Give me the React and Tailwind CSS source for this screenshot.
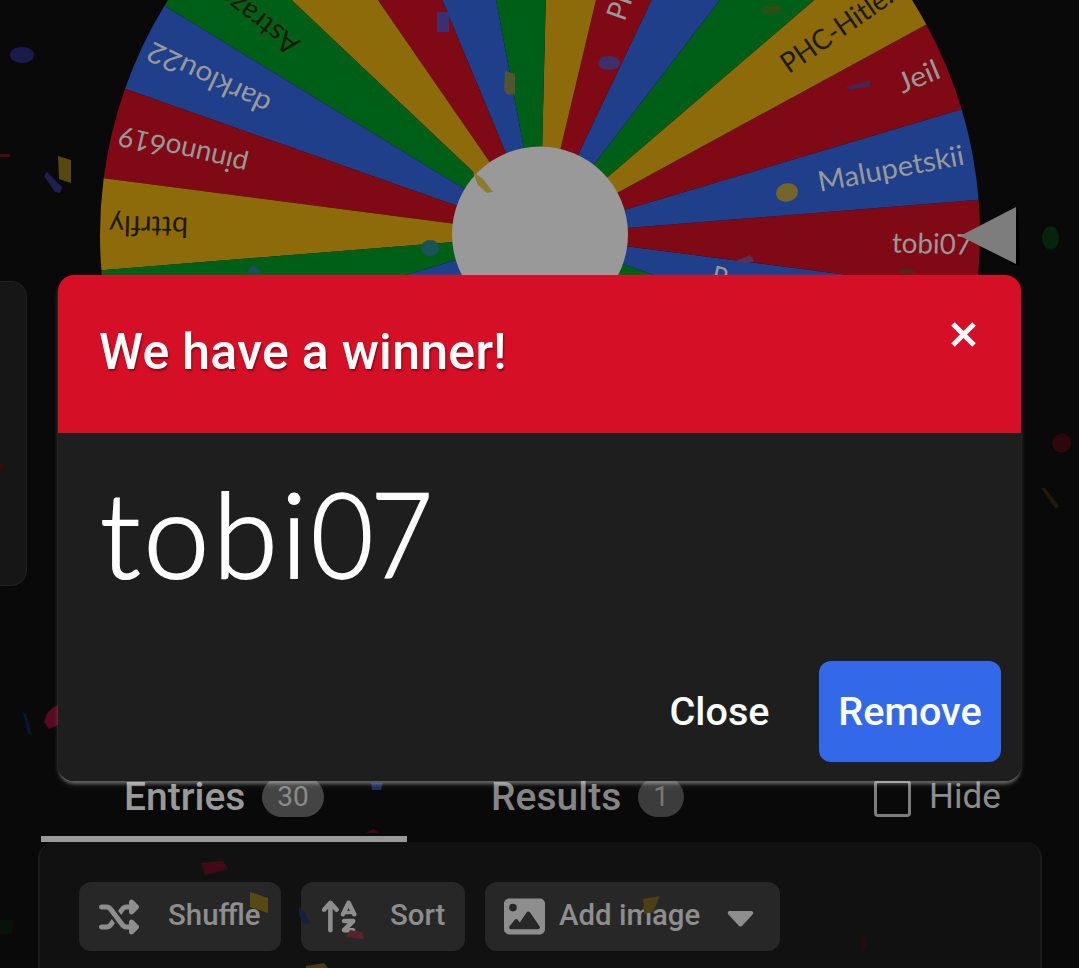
import React, { useState } from "react";
import { FaShuffle, FaArrowUpAZ, FaImage } from "react-icons/fa6";

const RED = "#800916";
const BLUE = "#1f3f8b";
const GREEN = "#005f17";
const YELLOW = "#8d6b0a";

const CX = 540;
const CY = 235;
const R = 440;

// angle = where the slice starts, counter clockwise from the right
const slices = [
  { angle: -31.4, color: GREEN },
  { angle: -19.4, color: BLUE, label: "P", start: 177, length: 15 },
  { angle: -7.4, color: RED, label: "tobi07", start: 352, length: 80 },
  { angle: 4.6, color: BLUE, label: "Malupetskii", start: 283, length: 148 },
  { angle: 16.6, color: RED, label: "Jeil", start: 389, length: 43 },
  { angle: 28.6, color: YELLOW, label: "PHC-Hitle...", start: 296, length: 142 },
  { angle: 40.6, color: GREEN },
  { angle: 52.6, color: BLUE },
  { angle: 64.6, color: RED, label: "PHC-", start: 229, length: 66 },
  { angle: 76.6, color: YELLOW },
  { angle: 88.6, color: GREEN },
  { angle: 100.6, color: BLUE },
  { angle: 112.6, color: RED },
  { angle: 124.6, color: YELLOW },
  { angle: 136.6, color: GREEN, label: "Astrazon", start: 307, length: 113 },
  { angle: 148.6, color: BLUE, label: "darklou22", start: 300, length: 133 },
  { angle: 160.6, color: RED, label: "pinuno619", start: 301, length: 132 },
  { angle: 172.6, color: YELLOW, label: "bttrfly", start: 352, length: 79 },
  { angle: 184.6, color: GREEN },
  { angle: 196.6, color: BLUE },
];

function point(angle) {
  const rad = (angle * Math.PI) / 180;
  return `${CX + R * Math.cos(rad)} ${CY - R * Math.sin(rad)}`;
}

function Wheel() {
  return (
    <svg width="1079" height="290" viewBox="0 0 1079 290" className="block shrink-0">
      {slices.map((s) => (
        <path
          key={s.angle}
          d={`M${CX} ${CY} L${point(s.angle)} A${R} ${R} 0 0 0 ${point(s.angle + 12)} Z`}
          fill={s.color}
        />
      ))}
      {slices
        .filter((s) => s.label)
        .map((s) => (
          <text
            key={s.angle}
            x={CX + s.start}
            y={CY + 9}
            textLength={s.length}
            lengthAdjust="spacingAndGlyphs"
            transform={`rotate(${-(s.angle + 6)} ${CX} ${CY})`}
            fill={s.color === RED || s.color === BLUE ? "#999999" : "#1c1a08"}
            className="font-['Lato',sans-serif] text-[28px] [font-variant-ligatures:none]"
          >
            {s.label}
          </text>
        ))}
      <circle cx={CX} cy="234.5" r="88" fill="#999999" />
      <path d="M1018 206 L1020 266 L1010 264 Z" fill="#000000" />
      <path d="M960 236 L1016 207 V264 Z" fill="#7d7d7d" />
    </svg>
  );
}

const confetti = [
  ["M10 55a12 8 0 1 0 24 0a12 8 0 1 0-24 0", "#1a1b4c"],
  ["M0 154h10v3h-10z", "#4a0a12"],
  ["M58 156l13 4v23l-12-4z", "#58470f"],
  ["M47 172l15 15l-2 6l-5-1l-11-16z", "#1e2050"],
  ["M437 12h12v20h-12z", "#3a2f72"],
  ["M505 71l10 3v20l-7 1l-4-5z", "#51562f"],
  ["M598 63a11 7 0 1 0 22 0a11 7 0 1 0-22 0", "#3d3069"],
  ["M776 194a11 9 -15 1 0 22-3a11 9 -15 1 0-22 3", "#75652a"],
  ["M846 87l24-6v5l-20 4z", "#41285a"],
  ["M473 172l10 7l10 13l-6 1l-9-8z", "#8b7c30"],
  ["M421 248a9 8 0 1 0 18 0a9 8 0 1 0-18 0", "#1a5355"],
  ["M246 273l8-8l8 8z", "#1d4b68"],
  ["M762 9q12-8 22 0q-10 8-20 4z", "#2c4f18"],
  ["M736 261l14-6l4 6l-9 3z", "#593059"],
  ["M898 273q8-8 18 0z", "#44301a"],
  ["M1042 238a8 11 0 1 0 17 0a8 11 0 1 0-17 0", "#04240b"],
  ["M1052 443a9 9 0 1 0 19 0a9 9 0 1 0-19 0", "#2e070e"],
  ["M1041 488l4 0l14 18l-3 3z", "#221b0b"],
  ["M0 462l4 4l-4 6z", "#3c0810"],
  ["M44 722q2-12 14-17v20l-9 4z", "#560a20"],
  ["M23 712l3 2l6 20l-4 0z", "#0a1633"],
  ["M371 783h12l-2 7h-9z", "#1d2c5b"],
  ["M366 833l7-4l7 4z", "#3b0a13"],
  ["M201 863l22-2l5 8l-23 6z", "#430916"],
  ["M250 892l18 6l0 15l-18-6z", "#574814"],
  ["M299 907l6 6l5 10l-6 1l-5-9z", "#1b1e3c"],
  ["M350 930l12 2l2 7l-18-2z", "#57242b"],
  ["M306 966l18-3l4 5h-22z", "#4b3a10"],
  ["M643 899l17-3l-7 16l-9 2z", "#4b4014"],
  ["M860 934l4 2l4 12l-6 3z", "#200d0e"],
  ["M0 920h14l-2 14h-12z", "#06130a"],
];

function Confetti() {
  return (
    <svg width="1079" height="968" className="absolute inset-0 pointer-events-none">
      {confetti.map(([d, fill]) => (
        <path key={d} d={d} fill={fill} />
      ))}
    </svg>
  );
}

function Tabs() {
  return (
    <div className="flex h-[62px] pl-[41px] shrink-0">
      <div className="flex w-[366px] h-full border-b-[6px] border-[#999999] pl-[83px] text-[#999999]">
        <span className="text-[39px] leading-[38px] font-medium mt-[-2px] w-[138px] whitespace-nowrap">
          Entries
        </span>
        <span className="flex justify-center w-[62px] h-[40px] mt-[-3px] rounded-full bg-[#444444] text-[#8a8a8a] text-[28px] leading-[39px]">
          30
        </span>
      </div>
      <div className="flex w-[467px] pl-[84px] text-[#858585]">
        <span className="text-[39px] leading-[38px] font-medium mt-[-2px] w-[147px] whitespace-nowrap">
          Results
        </span>
        <span className="flex justify-center w-[46px] h-[40px] mt-[-3px] rounded-full bg-[#3c3c3c] text-[#777777] text-[28px] leading-[39px]">
          1
        </span>
      </div>
      <label className="flex text-[#8c8c8c]">
        <span className="w-[37px] h-[37px] border-[3px] border-[#7c7c7c] rounded-[4px]" />
        <span className="ml-[18px] text-[35px] leading-[35px] mt-[-1px]">Hide</span>
      </label>
    </div>
  );
}

function ToolButton({ className, children }) {
  return (
    <button
      className={`flex items-center h-[69px] rounded-xl bg-[#272727] text-[#8e8e8e] text-[29.4px] font-medium whitespace-nowrap ${className}`}
    >
      {children}
    </button>
  );
}

function Toolbar() {
  return (
    <div className="flex gap-5 w-[1004px] h-[140px] ml-[38px] pl-[39px] pt-[40px] shrink-0 bg-[#111111] border-x-2 border-[#191919] rounded-t-2xl">
      <ToolButton className="w-[202px] pl-[20px]">
        <FaShuffle className="w-[40px] h-[40px] shrink-0" />
        <span className="ml-[29px] mb-[3px]">Shuffle</span>
      </ToolButton>
      <ToolButton className="w-[164px] pl-[18px]">
        <FaArrowUpAZ className="w-[41px] h-[41px] shrink-0" />
        <span className="ml-[30px] mb-[3px]">Sort</span>
      </ToolButton>
      <ToolButton className="w-[295px] pl-[19px]">
        <FaImage className="w-[41px] h-[41px] shrink-0" />
        <span className="ml-[14px] mb-[3px]">Add image</span>
        <svg viewBox="0 0 27 17" className="w-[27px] h-[17px] ml-[27px] mt-[3px]">
          <path d="M2 1h23q2 1 1 3L15 16q-1.500 1-3 0L1 4Q0 2 2 1z" fill="currentColor" />
        </svg>
      </ToolButton>
    </div>
  );
}

// digits are narrower and tighter than letters in the winner's name
function WinnerName({ name }) {
  return name.split(/(\d+)/).map((part, i) => (
    <span
      key={i}
      className={
        i % 2
          ? "inline-block origin-left scale-x-[0.91] tracking-[-3px]"
          : "tracking-[3.3px]"
      }
    >
      {part}
    </span>
  ));
}

function WinnerDialog({ name, onClose }) {
  return (
    <div className="absolute left-[58px] top-[275px] w-[963px] h-[506px] rounded-[16px] shadow-[0_4px_3px_-1px_rgba(255,255,255,0.24),0_5px_7px_-1px_rgba(255,255,255,0.12),0_1px_5px_rgba(255,255,255,0.1)]">
      <div className="flex flex-col h-full rounded-[16px] overflow-hidden bg-[#1e1e1e] text-white">
        <div className="flex justify-between h-[158px] pl-[41px] pr-[44px] bg-[#d50f25] shrink-0">
          <h1 className="mt-[47px] text-[50px] leading-[60px] font-medium tracking-[0.28px] [text-shadow:1px_2px_2px_rgba(0,0,0,0.4)]">
            We have a winner!
          </h1>
          <button onClick={onClose} aria-label="close" className="mt-[46px] h-[27px]">
            <svg viewBox="0 0 27 27" className="w-[27px] h-[27px]">
              <path d="M3 3L24 24M24 3L3 24" stroke="white" strokeWidth="5" />
            </svg>
          </button>
        </div>
        <div className="h-[228px] pl-[42px] pt-[28px] font-['Lato',sans-serif] font-light text-[118px] leading-[144px] [-webkit-text-stroke:2px_white]">
          <WinnerName name={name} />
        </div>
        <div className="flex justify-end pr-[20px] text-[39.6px] font-medium">
          <button onClick={onClose} className="w-[150px] h-[101px] pr-[1px]">
            Close
          </button>
          <button
            onClick={onClose}
            className="ml-[24px] w-[182px] h-[101px] rounded-xl bg-[#3369e8]"
          >
            Remove
          </button>
        </div>
      </div>
    </div>
  );
}

function App() {
  const [open, setOpen] = useState(true);

  return (
    <div className="relative flex flex-col w-[1079px] h-[968px] overflow-hidden bg-[#090909] font-['Roboto',sans-serif]">
      <Wheel />
      <div className="h-[490px] shrink-0">
        <div className="w-[27px] h-[305px] mt-[-9px] rounded-r-[16px] bg-[#161616] border border-l-0 border-[#222222]" />
      </div>
      <Tabs />
      <Toolbar />
      <Confetti />
      {open && <WinnerDialog name="tobi07" onClose={() => setOpen(false)} />}
    </div>
  );
}

export default App;
